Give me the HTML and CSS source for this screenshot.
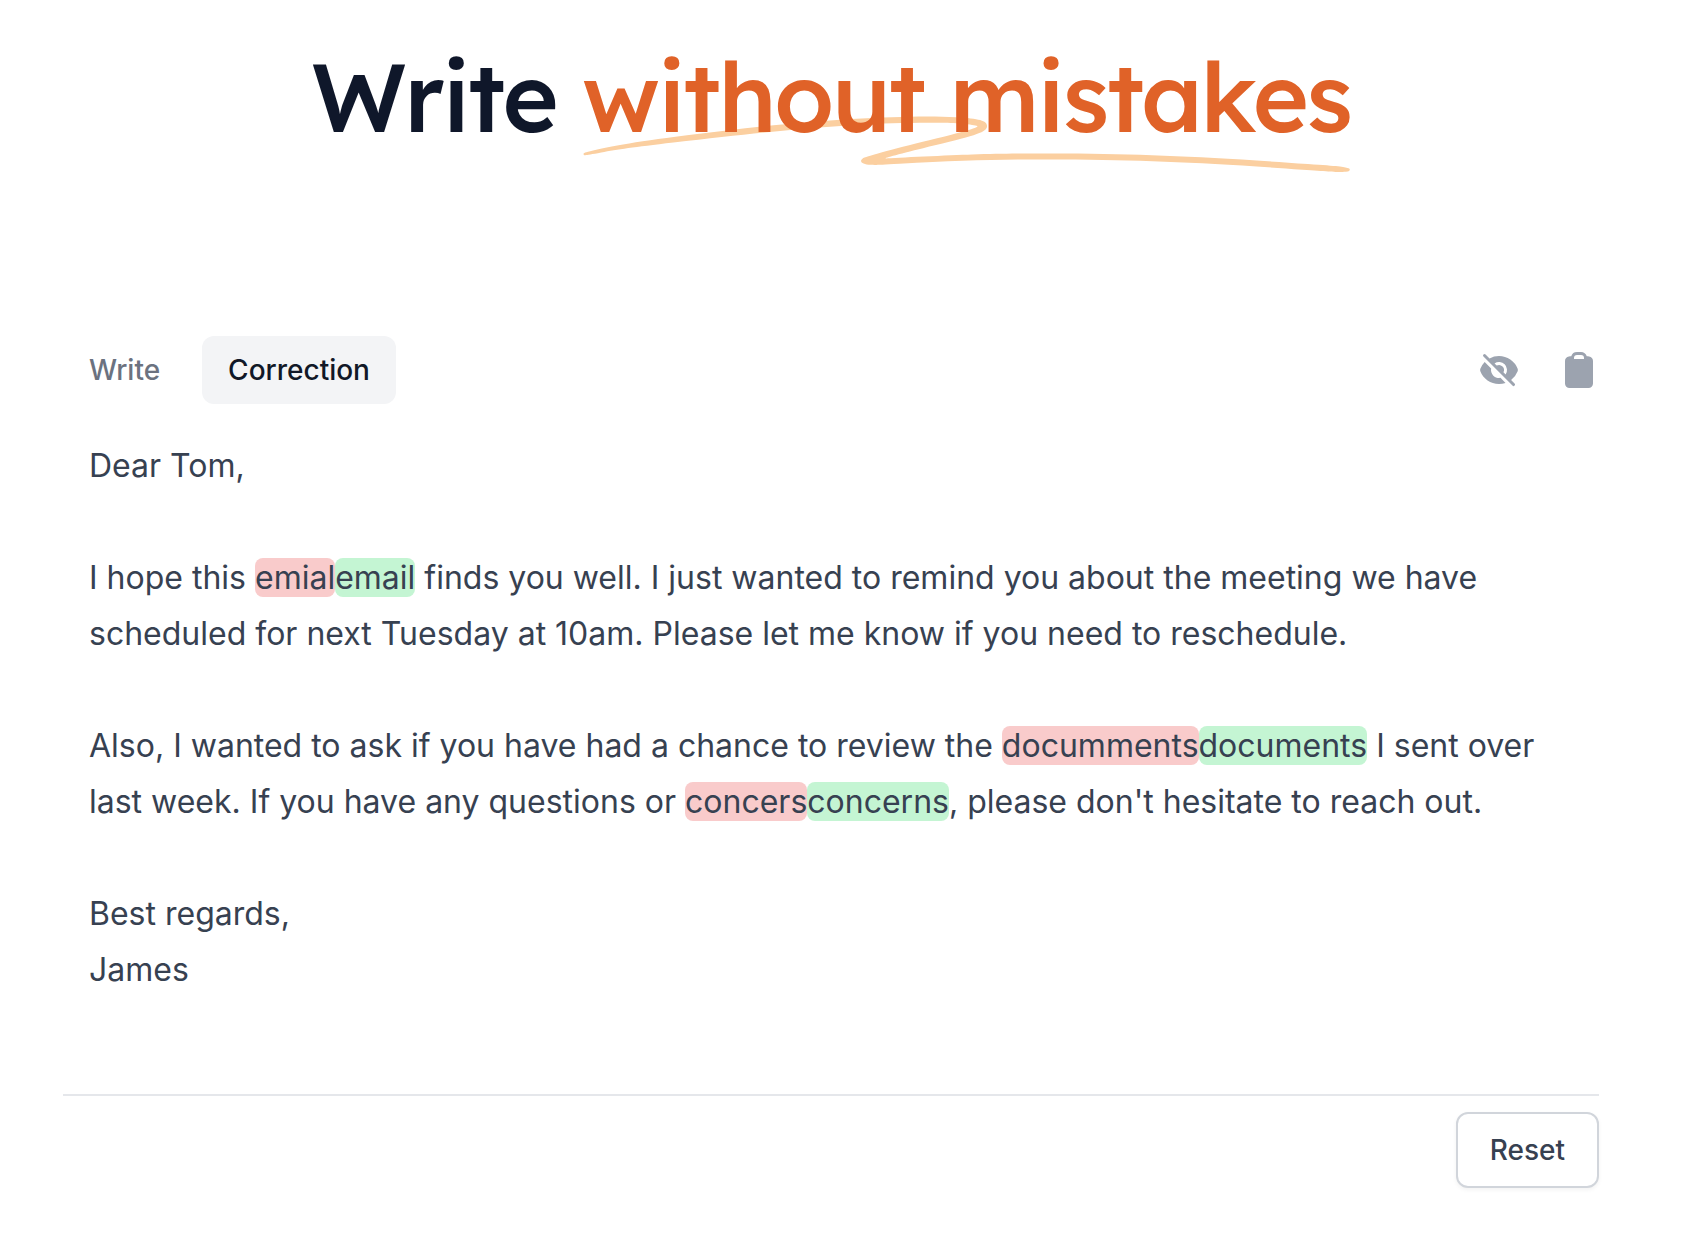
FILE: index.html
```
<!DOCTYPE html>
<html lang="en">
<head>
    <meta charset="UTF-8">
    <meta name="viewport" content="width=device-width, initial-scale=1.0">
    <title>Write without mistakes</title>
    <link rel="stylesheet" href="styles.css">
</head>
<body>
    <h1>Write
        <span class="highlight">
            <svg class="swash" viewBox="0 0 418 42" preserveAspectRatio="none" aria-hidden="true">
                <path d="M203.371.916c-26.013-2.078-76.686 1.963-124.73 9.946L67.3 12.749C35.421 18.062 18.2 21.766 6.004 25.934 1.244 27.561.828 27.778.874 28.61c.07 1.214.828 1.121 9.595-1.176 9.072-2.377 17.15-3.92 39.246-7.496C123.565 7.986 157.869 4.492 195.942 5.046c7.461.108 19.25 1.696 19.17 2.582-.107 1.183-7.874 4.31-25.75 10.366-21.992 7.45-35.43 12.534-36.701 13.884-2.173 2.308-.202 4.407 4.442 4.734 2.654.187 3.263.157 15.593-.78 35.401-2.686 57.944-3.488 88.365-3.143 46.327.526 75.721 2.23 130.788 7.584 19.787 1.924 20.814 1.98 24.557 1.332l.066-.011c1.201-.203 1.53-1.825.399-2.335-2.911-1.31-4.893-1.604-22.048-3.261-57.509-5.556-87.871-7.36-132.059-7.842-23.239-.254-33.617-.116-50.627.674-11.629.54-42.371 2.494-46.696 2.967-2.359.259 8.133-3.625 26.504-9.81 23.239-7.825 27.934-10.149 28.304-14.005.417-4.348-3.529-6-16.878-7.066Z"/>
            </svg>
            <span class="highlight-text">without mistakes</span>
        </span>
    </h1>

    <main>
        <div class="toolbar">
            <div class="tabs">
                <button type="button" class="tab">Write</button>
                <button type="button" class="tab active">Correction</button>
            </div>
            <div class="actions">
                <button type="button" class="icon-btn" aria-label="Hide corrections">
                    <svg viewBox="0 0 20 20" aria-hidden="true">
                        <path fill-rule="evenodd" d="M3.28 2.22a.75.75 0 0 0-1.06 1.06l14.5 14.5a.75.75 0 1 0 1.06-1.06l-1.745-1.745a10.029 10.029 0 0 0 3.3-4.38 1.651 1.651 0 0 0 0-1.185A10.004 10.004 0 0 0 9.999 3a9.956 9.956 0 0 0-4.744 1.194L3.28 2.22ZM7.752 6.69l1.092 1.092a2.5 2.5 0 0 1 3.374 3.373l1.091 1.092a4 4 0 0 0-5.557-5.557Z"/>
                        <path d="M10.748 13.93l2.523 2.523a9.987 9.987 0 0 1-3.27.547c-4.258 0-7.894-2.66-9.337-6.41a1.651 1.651 0 0 1 0-1.186A10.007 10.007 0 0 1 2.839 6.02L6.07 9.252a4 4 0 0 0 4.678 4.678Z"/>
                    </svg>
                </button>
                <button type="button" class="icon-btn" aria-label="Copy to clipboard">
                    <svg viewBox="0 0 20 20" aria-hidden="true">
                        <path fill-rule="evenodd" d="M13.887 3.182c.396.037.79.08 1.183.128C16.194 3.45 17 4.414 17 5.517V16.75A2.25 2.25 0 0 1 14.75 19h-9.5A2.25 2.25 0 0 1 3 16.75V5.517c0-1.103.806-2.068 1.93-2.207.393-.048.787-.09 1.183-.128A3.001 3.001 0 0 1 9 1h2c1.373 0 2.531.923 2.887 2.182ZM7.5 4A1.5 1.5 0 0 1 9 2.5h2A1.5 1.5 0 0 1 12.5 4v.5h-5V4Z"/>
                    </svg>
                </button>
            </div>
        </div>

        <div class="letter">
            <p>Dear Tom,</p>
            <p>I hope this <del>emial</del><ins>email</ins> finds you well. I just wanted to remind you about the meeting we have scheduled for next Tuesday at 10am. Please let me know if you need to reschedule.</p>
            <p>Also, I wanted to ask if you have had a chance to review the <del>documments</del><ins>documents</ins> I sent over last week. If you have any questions or <del>concers</del><ins>concerns</ins>, please don't hesitate to reach out.</p>
            <p>Best regards,<br>James</p>
        </div>

        <div class="footer">
            <button type="button" class="reset-btn">Reset</button>
        </div>
    </main>
</body>
</html>
```

FILE: styles.css
```
* {
    box-sizing: border-box;
}

body {
    margin: 0;
    padding: 48px 97px 40px 63px;
    background: #fff;
    color: #374151;
    font-family: Inter, sans-serif;
}

h1 {
    margin: 0 0 192px;
    font-family: Lexend, Lato, sans-serif;
    font-size: 96px;
    font-weight: 500;
    line-height: 96px;
    letter-spacing: -0.025em;
    text-align: center;
    color: #0f172a;
}

.highlight {
    position: relative;
    display: inline-block;
    white-space: nowrap;
    color: #e06228;
}

.highlight-text {
    position: relative;
}

/* hand drawn underline behind the heading */
.swash {
    position: absolute;
    top: 68px;
    left: 0;
    width: 100%;
    height: 56px;
    fill: #fbcfa0;
}

button {
    font-family: inherit;
    font-size: 28px;
    font-weight: 500;
    line-height: 40px;
    border: none;
    cursor: pointer;
}

.toolbar,
.tabs,
.actions {
    display: flex;
    align-items: center;
}

.toolbar {
    justify-content: space-between;
}

.tabs {
    gap: 16px;
}

.actions {
    gap: 40px;
}

.tab {
    padding: 14px 26px;
    border-radius: 12px;
    background: #fff;
    color: #6b7280;
}

.tab.active {
    background: #f3f4f6;
    color: #111827;
}

.icon-btn {
    width: 40px;
    height: 40px;
    padding: 0;
    background: none;
}

.icon-btn svg {
    display: block;
    width: 40px;
    height: 40px;
    fill: #9ca3af;
}

.letter {
    padding: 34px 26px 96px;
    font-size: 32px;
    line-height: 56px;
}

.letter p {
    margin: 0 0 56px;
}

.letter p:last-child {
    margin-bottom: 0;
}

del,
ins {
    border-radius: 8px;
    text-decoration: none;
}

del {
    background: #f9cbcb;
}

ins {
    background: #c4f5d3;
}

.footer {
    display: flex;
    justify-content: flex-end;
    padding-top: 16px;
    border-top: 2px solid #e5e7eb;
}

.reset-btn {
    padding: 16px 32px;
    border: 2px solid #d1d5db;
    border-radius: 12px;
    background: #fff;
    color: #374151;
    box-shadow: 0 2px 4px rgba(0, 0, 0, 0.05);
}
```
